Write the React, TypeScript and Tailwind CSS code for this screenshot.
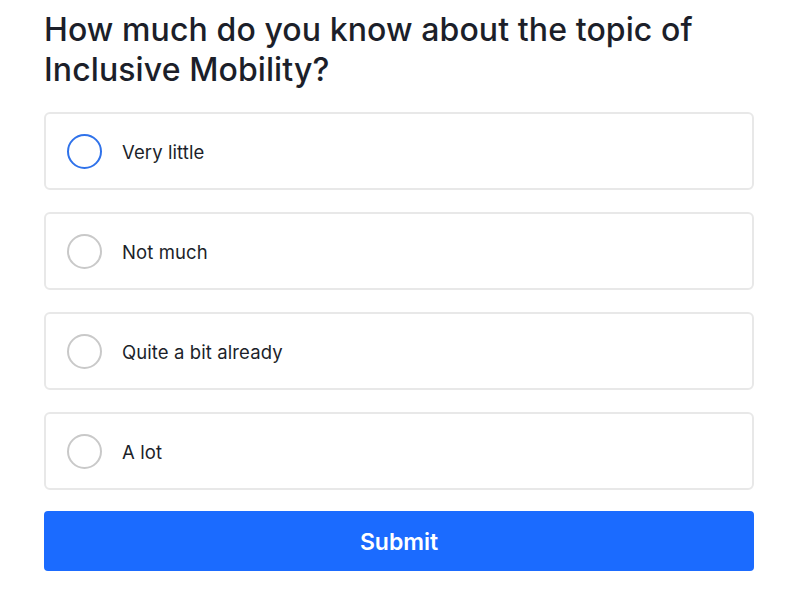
import React from "react";

const options = ["Very little", "Not much", "Quite a bit already", "A lot"];

export default function App() {
  return (
    <div className="min-h-[613px] bg-white pl-[44px] pt-[10px]" style={{ fontFamily: "Inter, 'Noto Sans', sans-serif" }}>
      <div className="w-[710px]">
        <h1 className="text-[32px] leading-[40px] font-medium text-[#1c1f2a] tracking-[0.1px]">
          How much do you know about the topic of Inclusive Mobility?
        </h1>
        <div className="mt-[22px] flex flex-col gap-[22px]">
          {options.map((o, i) => (
            <div
              key={o}
              className="h-[78px] rounded-[6px] border-2 border-[#e8e8e8] bg-white flex items-center pl-[21px]"
            >
              <div
                className={
                  i === 0
                    ? "w-[35px] h-[35px] rounded-full border-2 border-[#2f72ea]"
                    : "w-[35px] h-[35px] rounded-full border-2 border-[#c9c9c9]"
                }
              />
              <span className="ml-[20px] pt-[3px] text-[18.5px] text-[#1c1f2a] tracking-[0.1px]">{o}</span>
            </div>
          ))}
        </div>
        <button className="mt-[21px] w-full h-[60px] rounded-[4px] bg-[#1b6bff] text-white text-[23px] font-semibold pt-[2px]">
          Submit
        </button>
      </div>
    </div>
  );
}
